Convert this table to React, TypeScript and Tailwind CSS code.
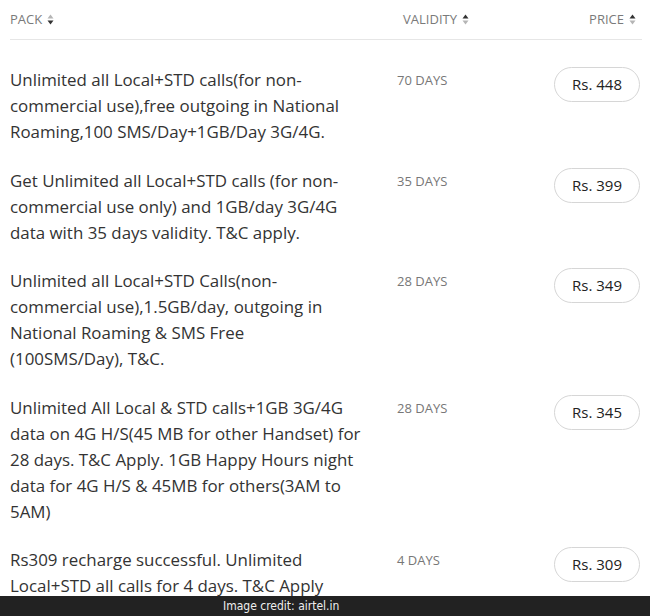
import React from "react";

type Plan = {
  lines: string[];
  validity: string;
  price: string;
};

const plans: Plan[] = [
  {
    lines: [
      "Unlimited all Local+STD calls(for non-",
      "commercial use),free outgoing in National",
      "Roaming,100 SMS/Day+1GB/Day 3G/4G.",
    ],
    validity: "70 DAYS",
    price: "Rs. 448",
  },
  {
    lines: [
      "Get Unlimited all Local+STD calls (for non-",
      "commercial use only) and 1GB/day 3G/4G",
      "data with 35 days validity. T&C apply.",
    ],
    validity: "35 DAYS",
    price: "Rs. 399",
  },
  {
    lines: [
      "Unlimited all Local+STD Calls(non-",
      "commercial use),1.5GB/day, outgoing in",
      "National Roaming & SMS Free",
      "(100SMS/Day), T&C.",
    ],
    validity: "28 DAYS",
    price: "Rs. 349",
  },
  {
    lines: [
      "Unlimited All Local & STD calls+1GB 3G/4G",
      "data on 4G H/S(45 MB for other Handset) for",
      "28 days. T&C Apply. 1GB Happy Hours night",
      "data for 4G H/S & 45MB for others(3AM to",
      "5AM)",
    ],
    validity: "28 DAYS",
    price: "Rs. 345",
  },
  {
    lines: [
      "Rs309 recharge successful. Unlimited",
      "Local+STD all calls for 4 days. T&C Apply",
    ],
    validity: "4 DAYS",
    price: "Rs. 309",
  },
];

function SortIcon({ down }: { down?: boolean }) {
  // "down" = lower arrow is the dark one
  return (
    <svg width="7" height="11" viewBox="0 0 7 11" className="ml-[5px] inline-block">
      <path d="M3.5 0.5 L6.5 4.5 L0.5 4.5 Z" fill={down ? "#b5b5b5" : "#333"} />
      <path d="M3.5 10.5 L6.5 6.5 L0.5 6.5 Z" fill={down ? "#333" : "#b5b5b5"} />
    </svg>
  );
}

export default function App() {
  return (
    <div
      className="flex h-[616px] w-[650px] flex-col overflow-hidden bg-white"
      style={{ fontFamily: "'Open Sans', Lato, sans-serif" }}
    >
      <div className="flex-1 overflow-hidden pl-[10px] pr-[8px]">
        <div className="flex h-[40px] items-center border-b border-[#e6e6e6] text-[13px] uppercase text-[#7a7a7a]">
          <div className="flex flex-1 items-center">
            PACK
            <SortIcon down />
          </div>
          <div className="flex w-[186px] items-center">
            VALIDITY
            <SortIcon />
          </div>
          <div className="flex items-center pr-[6px]">
            PRICE
            <SortIcon />
          </div>
        </div>

        <div className="mt-[15px]">
          {plans.map((p) => (
            <div key={p.price} className="flex pb-[10.5px] pt-[12px]">
              <div className="flex-1 text-[16.9px] leading-[26px] text-[#333]">
                {p.lines.map((l, i) => (
                  <div key={i} className="whitespace-nowrap">
                    {l}
                  </div>
                ))}
              </div>
              <div className="w-[157px] pt-[4px] text-[13px] text-[#777]">{p.validity}</div>
              <div className="mr-[2px] flex h-[35px] w-[86px] items-center justify-center rounded-full border border-[#d6d6d6] text-[15px] text-[#222]">
                {p.price}
              </div>
            </div>
          ))}
        </div>
      </div>
      <div
        className="flex h-[20px] items-center bg-[#222] pl-[223px] text-[12px] text-[#eee]"
        style={{ fontFamily: "'Liberation Sans Narrow', 'DejaVu Sans Condensed', sans-serif" }}
      >
        Image credit: airtel.in
      </div>
    </div>
  );
}
